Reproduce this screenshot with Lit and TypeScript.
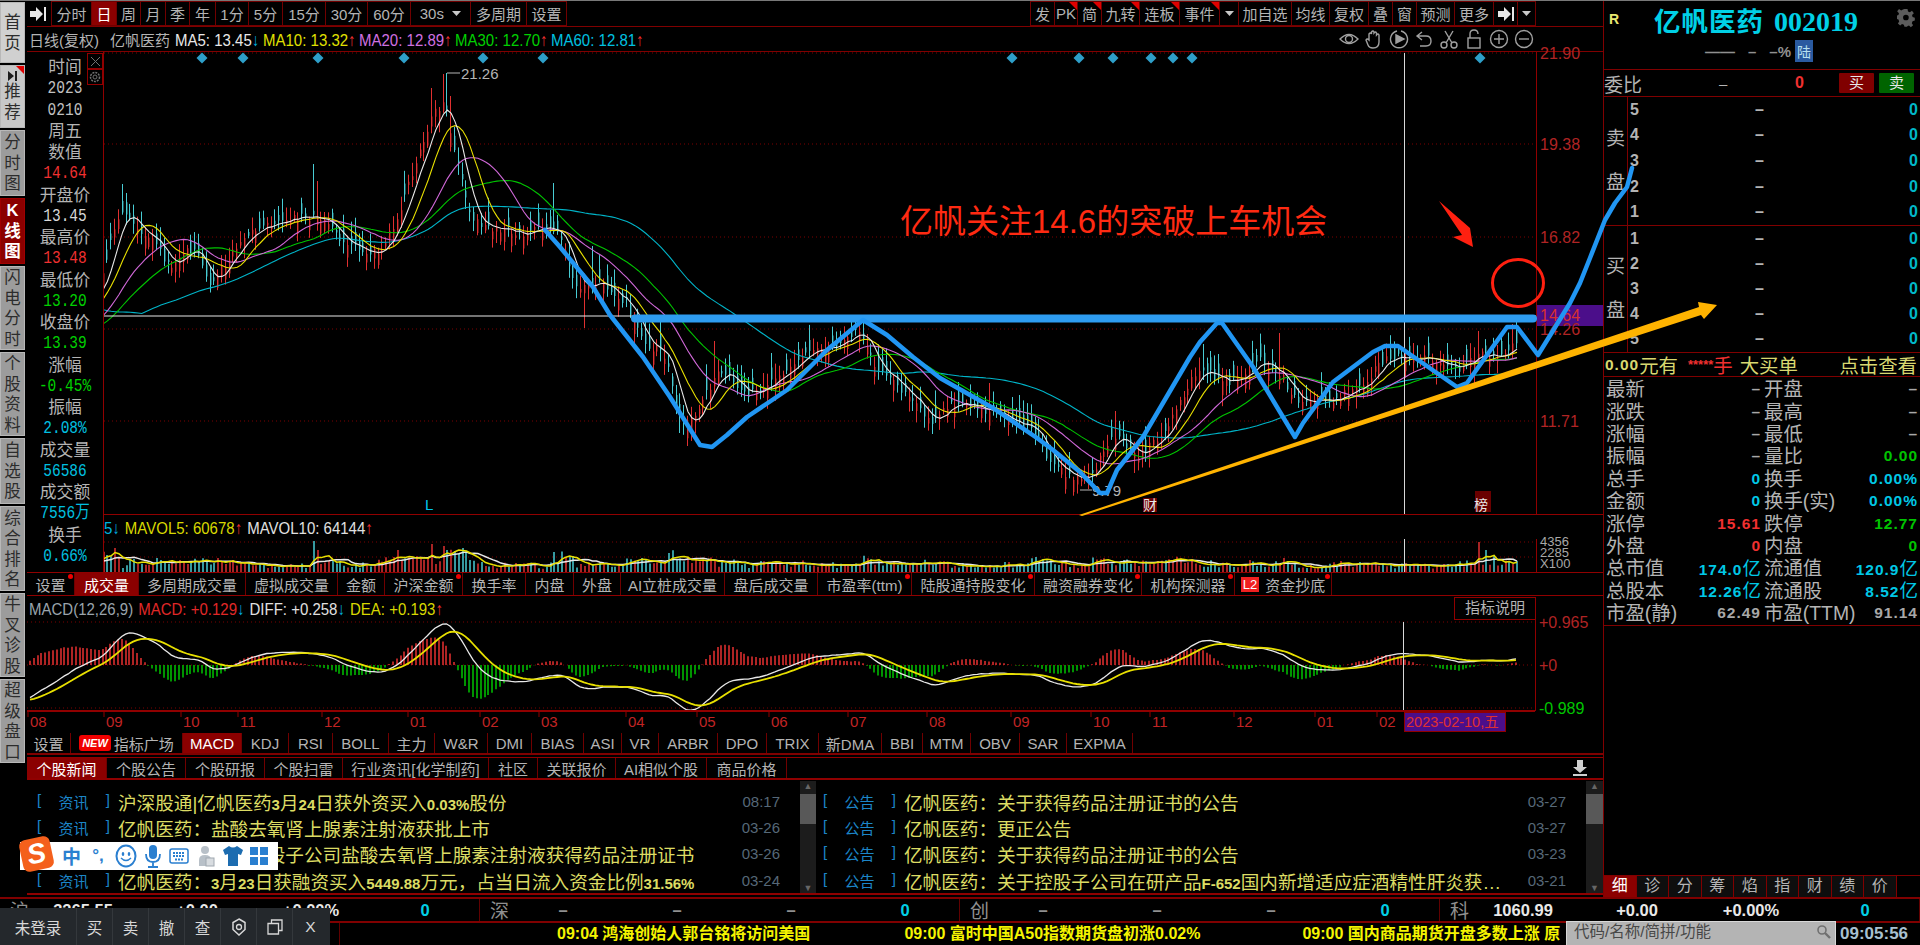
import { LitElement, html, svg, css } from "lit";
import { customElement } from "lit/decorators.js";

// ---- chart data: the white MA5 line traced in page pixels, bars are generated around it
const MA5_TRACE = [
  [30, 345], [60, 330], [90, 300], [106, 287], [122, 227], [131, 210], [139, 217], [145, 230], [163, 243], [178, 268],
  [192, 253], [200, 247], [208, 260], [218, 285], [229, 267], [245, 243], [261, 227], [286, 220], [314, 215], [327, 220],
  [339, 227], [351, 240], [367, 247], [386, 253], [400, 227], [412, 197], [424, 160], [441, 113], [453, 103], [461, 143],
  [469, 173], [478, 213], [490, 227], [510, 228], [531, 232], [547, 228], [559, 227], [570, 240], [575, 263], [585, 287],
  [593, 287], [607, 278], [617, 290], [633, 300], [642, 322], [655, 345], [668, 350], [677, 367], [685, 410], [695, 427],
  [708, 403], [727, 370], [737, 377], [748, 392], [763, 392], [777, 382], [793, 370], [807, 360], [817, 347], [837, 345],
  [853, 340], [863, 333], [872, 337], [880, 363], [888, 373], [903, 383], [917, 397], [930, 410], [942, 423], [953, 407],
  [960, 402], [973, 402], [990, 408], [1013, 417], [1040, 427], [1053, 453], [1073, 473], [1080, 477], [1100, 472],
  [1110, 453], [1120, 438], [1130, 438], [1142, 455], [1150, 452], [1163, 440], [1180, 417], [1193, 390], [1205, 370],
  [1217, 370], [1222, 377], [1237, 382], [1250, 377], [1265, 358], [1272, 363], [1290, 373], [1297, 395], [1305, 399],
  [1320, 398], [1343, 400], [1360, 387], [1373, 382], [1387, 363], [1400, 355], [1410, 357], [1430, 358], [1453, 360],
  [1467, 367], [1480, 357], [1493, 352], [1507, 357], [1515, 347], [1530, 335],
];

const SPIKES: [number, number][] = [
  [122, 183], [125, 192], [313, 163], [316, 180], [433, 87], [441, 73], [447, 72], [452, 95], [553, 182], [593, 245],
  [714, 340], [988, 382], [1116, 410], [1202, 343], [1281, 332], [1479, 330], [1513, 323],
];
const DIPS: [number, number][] = [[583, 327], [688, 445], [680, 432], [932, 433], [1135, 472]];
const VOL_SPIKES: [number, number][] = [
  [113, 24], [313, 31], [316, 22], [395, 22], [433, 28], [441, 26], [447, 22], [462, 24], [553, 20], [1479, 30], [1486, 22], [1493, 17],
];

const STEP = 3.82;

function traceY(x: number) {
  const t = MA5_TRACE;
  if (x <= t[0][0]) return t[0][1];
  for (let i = 1; i < t.length; i++) {
    if (x <= t[i][0]) {
      const f = (x - t[i - 1][0]) / (t[i][0] - t[i - 1][0]);
      return t[i - 1][1] + f * (t[i][1] - t[i - 1][1]);
    }
  }
  return t[t.length - 1][1];
}

let seed = 20230210;
function rnd() {
  seed = (seed + 0x6d2b79f5) | 0;
  let t = Math.imul(seed ^ (seed >>> 15), 1 | seed);
  t = (t + Math.imul(t ^ (t >>> 7), 61 | t)) ^ t;
  return ((t ^ (t >>> 14)) >>> 0) / 4294967296;
}

interface Bar { x: number; open: number; close: number; high: number; low: number; up: boolean; vol: number; }

const bars: Bar[] = [];
const count = Math.floor((1516 - 30) / STEP) + 1;
for (let i = 0; i < count; i++) {
  const x = 30 + i * STEP;
  const close = traceY(x + 8) + (rnd() - 0.5) * 8;
  const slope = traceY(x + 12) - traceY(x + 8);
  const up = rnd() < 0.5 - Math.max(-0.3, Math.min(0.3, slope * 0.05));
  const len = 4 + rnd() * 20;
  const open = up ? close + len * 0.6 : close - len * 0.6;
  let high = Math.min(open, close) - rnd() * 12 - 3;
  let low = Math.max(open, close) + rnd() * 10 + 2;
  for (const [sx, top] of SPIKES) if (Math.abs(sx - x) < STEP / 2) high = top;
  for (const [sx, bot] of DIPS) if (Math.abs(sx - x) < STEP / 2) low = bot;
  let vol = 3 + rnd() * 6 + Math.abs(slope) * 0.8;
  for (const [sx, h] of VOL_SPIKES) if (Math.abs(sx - x) < STEP / 2) vol = h;
  bars.push({ x, open, close, high, low, up, vol });
}

const older = [
  ...Array(30).fill(205),
  ...Array(30).fill(340),
];
const closes = [...older, ...bars.map((b) => b.close)];

function maLine(n: number) {
  return bars.map((b, i) => {
    const end = i + older.length + 1;
    const part = closes.slice(end - n, end);
    return [b.x + 1, part.reduce((a, c) => a + c, 0) / n];
  });
}

function volLine(n: number) {
  return bars.map((b, i) => {
    const from = Math.max(0, i - n + 1);
    const part = bars.slice(from, i + 1);
    return [b.x + 1, 571 - part.reduce((a, c) => a + c.vol, 0) / part.length];
  });
}

const toPrice = (y: number) => 21.9 - (y - 52) / 36.1;
const line = (pts: number[][]) => "M" + pts.map((p) => `${p[0].toFixed(1)} ${p[1].toFixed(1)}`).join("L");

const macd = (() => {
  const p0 = toPrice(bars[0].close);
  let e12 = p0;
  let e26 = p0 + 0.8;
  let dea = -0.8;
  return bars.map((b) => {
    const p = toPrice(b.close);
    e12 += (p - e12) * (2 / 13);
    e26 += (p - e26) * (2 / 27);
    const diff = e12 - e26;
    dea += (diff - dea) * (2 / 10);
    return { x: b.x + 1, diff, dea, bar: 2 * (diff - dea) };
  });
})();

const macdY = (v: number) => Math.max(612, 665 - v * 44);

const paths = {
  redWick: bars.filter((b) => b.up).map((b) => `M${Math.round(b.x) + 0.5} ${b.high.toFixed(1)}V${b.low.toFixed(1)}`).join(""),
  cyanWick: bars.filter((b) => !b.up).map((b) => `M${Math.round(b.x) + 0.5} ${b.high.toFixed(1)}V${b.low.toFixed(1)}`).join(""),
  redBody: bars.filter((b) => b.up).map((b) => `M${Math.round(b.x) + 0.7} ${b.open.toFixed(1)}V${b.close.toFixed(1)}`).join(""),
  cyanBody: bars.filter((b) => !b.up).map((b) => `M${Math.round(b.x) + 0.7} ${b.open.toFixed(1)}V${b.close.toFixed(1)}`).join(""),
  volRed: bars.filter((b) => b.up).map((b) => `M${Math.round(b.x) + 1} 571V${(571 - b.vol).toFixed(1)}`).join(""),
  volCyan: bars.filter((b) => !b.up).map((b) => `M${Math.round(b.x) + 1} 571V${(571 - b.vol).toFixed(1)}`).join(""),
  macdRed: macd.filter((m) => m.bar > 0).map((m) => `M${Math.round(m.x)} 665V${macdY(m.bar).toFixed(1)}`).join(""),
  macdGreen: macd.filter((m) => m.bar < 0).map((m) => `M${Math.round(m.x)} 665V${macdY(m.bar).toFixed(1)}`).join(""),
};

const base = css`
  :host {
    display: block;
    font-family: "Liberation Sans", "Noto Sans CJK SC", sans-serif;
    color: #b4b4b4;
  }
  svg {
    display: block;
  }
  svg text {
    font-family: "Liberation Sans", "Noto Sans CJK SC", sans-serif;
  }
`;

const arrowIcon = svg`<path d="M0 4h6V0l7 7-7 7v-4H0zM14 0h2v14h-2z" fill="#e8e8e8"/>`;

// ---- price pane
@customElement("price-pane")
export class PricePane extends LitElement {
  static styles = [base, css`:host { height: 462px; } svg { overflow: visible; }`];

  render() {
    const grids = [52, 143, 236, 328, 420];
    const axis: [string, number][] = [["21.90", 52], ["19.38", 143], ["16.82", 236], ["14.26", 328], ["11.71", 420]];
    const diamonds = [202, 243, 318, 404, 483, 543, 1012, 1079, 1113, 1151, 1173, 1192, 1480];
    return html`<svg width="1499" height="462" viewBox="104 51 1499 462">
      ${grids.map((y) => svg`<line x1="104" x2="1536" y1=${y} y2=${y} stroke="#7c0000" stroke-dasharray="1 3"/>`)}
      ${diamonds.map((x) => svg`<polygon points="${x - 5.5},57 ${x},51.5 ${x + 5.5},57 ${x},62.5" fill="#2e9fc9"/>`)}
      <path d=${paths.redWick} stroke="#e03030" fill="none"/>
      <path d=${paths.redBody} stroke="#e03030" stroke-width="1.4" fill="none"/>
      <path d=${paths.cyanWick} stroke="#48ccd4" fill="none"/>
      <path d=${paths.cyanBody} stroke="#48ccd4" stroke-width="1.4" fill="none"/>
      <path d=${line(maLine(60))} stroke="#00b4c8" stroke-width="1.1" fill="none"/>
      <path d=${line(maLine(30))} stroke="#00c400" stroke-width="1.1" fill="none"/>
      <path d=${line(maLine(20))} stroke="#d068d8" stroke-width="1.1" fill="none"/>
      <path d=${line(maLine(10))} stroke="#e8e000" stroke-width="1.1" fill="none"/>
      <path d=${line(maLine(5))} stroke="#e8e8e8" stroke-width="1.1" fill="none"/>
      <line x1="104" x2="1536" y1="315" y2="315" stroke="#e8e8e8"/>
      <line x1="1404.5" x2="1404.5" y1="52" y2="513" stroke="#d8d8d8"/>
      <line x1="1536.5" x2="1536.5" y1="51" y2="513" stroke="#900000"/>
      <rect x="1537" y="304" width="66" height="21" fill="#4b0e8a"/>
      ${axis.map(([t, y]) => svg`<text x="1540" y=${y + 6} font-size="16" fill="#b02424">${t}</text>`)}
      <text x="1540" y="320" font-size="16" fill="#d83030">14.64</text>
      <line x1="447" x2="460" y1="72" y2="72" stroke="#b4b4b4"/>
      <text x="461" y="78" font-size="15" fill="#b4b4b4">21.26</text>
      <line x1="1080" x2="1092" y1="489" y2="489" stroke="#b4b4b4"/>
      <text x="1092" y="495" font-size="15" fill="#b4b4b4">9.79</text>
      <text x="425" y="509" font-size="15" fill="#00c8f0">L</text>
      <rect x="1143" y="497" width="14" height="14" fill="#6a0000"/>
      <text x="1143" y="509" font-size="14" fill="#e8e8e8">财</text>
      <rect x="1475" y="490" width="16" height="21" fill="#6a0000"/>
      <text x="1474" y="509" font-size="14" fill="#e8e8e8">榜</text>
    </svg>`;
  }
}

// ---- volume pane
@customElement("volume-pane")
export class VolumePane extends LitElement {
  static styles = [
    base,
    css`
      :host {
        border-top: 1px solid #900000;
        height: 58px;
      }
      .legend {
        height: 24px;
        display: flex;
        align-items: center;
        gap: 5px;
        font-size: 15px;
        white-space: nowrap;
        transform: scaleY(1.15);
      }
      .y { color: #d8d800; }
      .w { color: #e0e0e0; }
      .cut { color: #00b4e0; }
      .r { color: #f03030; }
      svg { overflow: visible; }
    `,
  ];

  render() {
    return html`<div class="legend">
        <span class="cut">5↓</span>
        <span class="y">MAVOL5: 60678<span class="r">↑</span></span>
        <span class="w">MAVOL10: 64144<span class="r">↑</span></span>
      </div>
      <svg width="1499" height="33" viewBox="104 538 1499 33">
        <line x1="104" x2="1536" y1="541" y2="541" stroke="#7c0000" stroke-dasharray="1 3"/>
        <line x1="104" x2="1536" y1="556" y2="556" stroke="#7c0000" stroke-dasharray="1 3"/>
        <path d=${paths.volRed} stroke="#e03030" stroke-width="1.5" fill="none"/>
        <path d=${paths.volCyan} stroke="#48ccd4" stroke-width="1.5" fill="none"/>
        <path d=${line(volLine(10))} stroke="#e8e8e8" stroke-width="1.5" fill="none"/>
        <path d=${line(volLine(5))} stroke="#e8e000" stroke-width="1.5" fill="none"/>
        <line x1="1404.5" x2="1404.5" y1="538" y2="571" stroke="#d8d8d8"/>
        <line x1="1536.5" x2="1536.5" y1="538" y2="571" stroke="#900000"/>
        <text x="1540" y="545" font-size="13" fill="#a8a8a8">4356</text>
        <text x="1540" y="556" font-size="13" fill="#a8a8a8">2285</text>
        <text x="1540" y="567" font-size="13" fill="#a8a8a8">X100</text>
      </svg>`;
  }
}

// ---- macd pane with its date axis
@customElement("macd-pane")
export class MacdPane extends LitElement {
  static styles = [
    base,
    css`
      .legend {
        height: 24px;
        display: flex;
        align-items: center;
        gap: 5px;
        padding-left: 2px;
        font-size: 15px;
        white-space: nowrap;
        transform: scaleY(1.15);
      }
      .g { color: #9aa4ac; }
      .m { color: #e02828; }
      .w { color: #e0e0e0; }
      .y { color: #d8d800; }
      .c { color: #00b4e0; }
      .r { color: #f03030; }
      .explain {
        position: absolute;
        left: 1427px;
        top: 1px;
        width: 82px;
        height: 23px;
        box-sizing: border-box;
        border: 1px solid #900000;
        text-align: center;
        line-height: 20px;
        font-size: 15px;
      }
      .wrap { position: relative; }
      svg { overflow: visible; }
    `,
  ];

  render() {
    const months: [string, number][] = [
      ["08", 31], ["09", 107], ["10", 184], ["11", 241], ["12", 325], ["01", 411], ["02", 483], ["03", 542], ["04", 629],
      ["05", 700], ["06", 772], ["07", 851], ["08", 930], ["09", 1014], ["10", 1094], ["11", 1153], ["12", 1237], ["01", 1318], ["02", 1380],
    ];
    return html`<div class="wrap">
      <div class="legend">
        <span class="g">MACD(12,26,9)</span>
        <span class="m">MACD: +0.129<span class="c">↓</span></span>
        <span class="w">DIFF: +0.258<span class="c">↓</span></span>
        <span class="y">DEA: +0.193<span class="r">↑</span></span>
      </div>
      <div class="explain">指标说明</div>
      <svg width="1575" height="113" viewBox="28 620 1575 113">
        <line x1="28" x2="1536" y1="622" y2="622" stroke="#7c0000" stroke-dasharray="1 3"/>
        <line x1="28" x2="1536" y1="665" y2="665" stroke="#7c0000" stroke-dasharray="1 3"/>
        <line x1="28" x2="1536" y1="708" y2="708" stroke="#7c0000" stroke-dasharray="1 3"/>
        <path d=${paths.macdRed} stroke="#e83030" stroke-width="1.5" fill="none"/>
        <path d=${paths.macdGreen} stroke="#00c400" stroke-width="1.5" fill="none"/>
        <path d=${line(macd.map((m) => [m.x, macdY(m.diff)]))} stroke="#e8e8e8" stroke-width="1.3" fill="none"/>
        <path d=${line(macd.map((m) => [m.x, macdY(m.dea)]))} stroke="#e8e000" stroke-width="1.8" fill="none"/>
        <line x1="1404.5" x2="1404.5" y1="622" y2="711" stroke="#d8d8d8"/>
        <line x1="1536.5" x2="1536.5" y1="620" y2="711" stroke="#900000"/>
        <line x1="28" x2="1536" y1="711" y2="711" stroke="#900000" stroke-width="2"/>
        <text x="1540" y="628" font-size="16" fill="#b02424">+0.965</text>
        <text x="1540" y="671" font-size="16" fill="#b02424">+0</text>
        <text x="1540" y="714" font-size="16" fill="#00c400">-0.989</text>
        ${months.map(
          ([t, x]) => svg`<line x1=${x - 2} x2=${x - 2} y1="711" y2="717" stroke="#900000"/>
            <text x=${x} y="727" font-size="15" fill="#c02424">${t}</text>`
        )}
        <rect x="1405.5" y="712.5" width="101" height="19" fill="#4b0e8a" stroke="#900000"/>
        <text x="1407" y="727" font-size="14.5" fill="#e03030">2023-02-10,五</text>
      </svg>
    </div>`;
  }
}

// ---- news
@customElement("news-panel")
export class NewsPanel extends LitElement {
  static styles = [
    base,
    css`
      :host {
        height: 140px;
      }
      .tabs {
        height: 23px;
        display: flex;
        border-top: 1px solid #900000;
        border-bottom: 2px solid #900000;
        box-sizing: border-box;
        position: relative;
        font-size: 15px;
      }
      .tab {
        display: flex;
        align-items: center;
        justify-content: center;
        border-right: 1px solid #700000;
        box-sizing: border-box;
        white-space: nowrap;
      }
      .tab.on {
        background: #8b0000;
        color: #fff;
      }
      .dl {
        position: absolute;
        right: 16px;
        top: 2px;
      }
      .cols {
        display: flex;
        margin-top: 1px;
        height: 114px;
        border-bottom: 2px solid #900000;
        box-sizing: border-box;
      }
      .col {
        padding: 7px 20px 0 10px;
        box-sizing: border-box;
        width: 773px;
      }
      .col.right {
        width: 770px;
        padding-left: 7px;
      }
      .row {
        height: 26.3px;
        display: flex;
        align-items: center;
        font-size: 18.6px;
        color: #dcdc64;
        white-space: nowrap;
      }
      .tag {
        width: 73px;
        margin-right: 8px;
        display: flex;
        justify-content: space-between;
        color: #1c86c8;
        font-size: 15px;
        flex: none;
      }
      .title {
        flex: 1;
        overflow: hidden;
      }
      .num {
        font-size: 15px;
        font-weight: 700;
      }
      .time {
        color: #566878;
        font-size: 15px;
        margin-left: 8px;
      }
      .bar {
        width: 16px;
        background: #1c1c1c;
        display: flex;
        flex-direction: column;
        align-items: center;
        flex: none;
        color: #666;
        font-size: 9px;
      }
      .bar.last { width: 17px; }
      .thumb {
        width: 100%;
        height: 30px;
        background: #585858;
        margin: 3px 0 auto;
      }
    `,
  ];

  // latin runs are set smaller than the CJK around them
  private title(t: string) {
    return t.split(/([0-9A-Z.%-]+)/).map((part, i) => (i % 2 ? html`<span class="num">${part}</span>` : part));
  }

  render() {
    const tabs: [string, number][] = [
      ["个股新闻", 80], ["个股公告", 79], ["个股研报", 79], ["个股扫雷", 78], ["行业资讯[化学制药]", 146], ["社区", 49], ["关联报价", 78], ["AI相似个股", 91], ["商品价格", 80],
    ];
    const left = [
      ["沪深股通|亿帆医药3月24日获外资买入0.03%股份", "08:17"],
      ["亿帆医药：盐酸去氧肾上腺素注射液获批上市", "03-26"],
      ["亿帆医药：关于控股子公司盐酸去氧肾上腺素注射液获得药品注册证书", "03-26"],
      ["亿帆医药：3月23日获融资买入5449.88万元，占当日流入资金比例31.56%", "03-24"],
    ];
    const right = [
      ["亿帆医药：关于获得药品注册证书的公告", "03-27"],
      ["亿帆医药：更正公告", "03-27"],
      ["亿帆医药：关于获得药品注册证书的公告", "03-23"],
      ["亿帆医药：关于控股子公司在研产品F-652国内新增适应症酒精性肝炎获…", "03-21"],
    ];
    const rows = (items: string[][], kind: string) =>
      items.map(
        ([t, d]) => html`<div class="row">
          <span class="tag"><span>[</span><span>${kind}</span><span>]</span></span>
          <span class="title">${this.title(t)}</span>
          <span class="time">${d}</span>
        </div>`
      );
    const scroll = (cls = "") => html`<div class="bar ${cls}"><span>▲</span><div class="thumb"></div><span>▼</span></div>`;
    return html`<div class="tabs">
        ${tabs.map(([t, w], i) => html`<div class="tab ${i === 0 ? "on" : ""}" style="width:${w}px">${t}</div>`)}
        <svg class="dl" width="14" height="17" viewBox="0 0 14 17"><path d="M4 0h6v7h4l-7 6-7-6h4zM0 14h14v2H0z" fill="#d0d0d0"/></svg>
      </div>
      <div class="cols">
        <div class="col">${rows(left, "资讯")}</div>
        ${scroll()}
        <div class="col right">${rows(right, "公告")}</div>
        ${scroll("last")}
      </div>`;
  }
}

// ---- right quote panel
@customElement("quote-panel")
export class QuotePanel extends LitElement {
  static styles = [
    base,
    css`
      :host {
        width: 317px;
        height: 896px;
        box-sizing: border-box;
        border-left: 1px solid #800000;
        display: flex;
        flex-direction: column;
        position: relative;
      }
      .head {
        height: 69px;
        border-bottom: 1px solid #800000;
        box-sizing: border-box;
        position: relative;
      }
      .titlebar {
        height: 36px;
        display: flex;
        align-items: center;
        padding-left: 4px;
      }
      .rmark {
        color: #e8e870;
        font: bold 14px "Liberation Sans", sans-serif;
        width: 45px;
        padding-left: 1px;
      }
      .name {
        color: #00d0e6;
        font-size: 26.5px;
        font-weight: 700;
        letter-spacing: 1px;
        white-space: nowrap;
      }
      .code {
        font-family: "Liberation Serif", serif;
        font-size: 28px;
        margin-left: 10px;
        letter-spacing: 0;
      }
      .gear {
        position: absolute;
        right: 5px;
        top: 7px;
      }
      .sub {
        display: flex;
        align-items: center;
        height: 28px;
        padding-left: 101px;
        font-size: 15px;
        color: #909090;
        font-weight: 700;
      }
      .sub span { margin-right: 13px; }
      .lu {
        background: #2a5aa0;
        color: #b8e0f0;
        font-size: 14px;
        padding: 1px 2px;
        margin-left: -9px;
        font-weight: 400;
      }
      .ratio {
        height: 27px;
        border-bottom: 1px solid #800000;
        box-sizing: border-box;
        display: flex;
        align-items: center;
        font-size: 19px;
        position: relative;
      }
      .dash1 { position: absolute; left: 115px; font-size: 15px; }
      .zero { position: absolute; left: 191px; font: bold 16px "Liberation Sans", sans-serif; color: #f03030; }
      .btn {
        position: absolute;
        top: 3px;
        width: 35px;
        height: 20px;
        color: #e8e8e8;
        font-size: 15px;
        text-align: center;
        line-height: 19px;
        border-radius: 1px;
      }
      .btn.buy { left: 235px; background: #800000; }
      .btn.sell { left: 275px; background: #006400; }
      .book {
        display: flex;
        border-bottom: 1px solid #800000;
        box-sizing: border-box;
      }
      .book.top { height: 129px; }
      .book.bottom { height: 127px; }
      .side {
        width: 24px;
        border-right: 1px solid #800000;
        box-sizing: border-box;
        font-size: 19px;
        display: flex;
        flex-direction: column;
        align-items: center;
        justify-content: center;
        gap: 24px;
        line-height: 20px;
      }
      .levels {
        flex: 1;
        display: flex;
        flex-direction: column;
        justify-content: space-around;
        padding: 0 2px 0 2px;
      }
      .lv {
        display: grid;
        grid-template-columns: 125px 1fr;
        font: bold 16px "Liberation Sans", sans-serif;
      }
      .lv b { text-align: right; color: #00b8c8; }
      .big {
        height: 24px;
        border-bottom: 1px solid #800000;
        box-sizing: border-box;
        display: flex;
        align-items: center;
        font-size: 19.4px;
        color: #d8d870;
        white-space: nowrap;
        padding-left: 1px;
      }
      .big .num { font: bold 15.5px "Liberation Sans", sans-serif; letter-spacing: 1px; }
      .big .stars { color: #f03030; margin-left: 10px; font-size: 13px; font-weight: 700; }
      .big .hand { color: #f03030; }
      .big .buyb { margin-left: 7px; }
      .big .look { margin-left: auto; margin-right: 3px; }
      .stats {
        display: grid;
        grid-template-columns: 158px 1fr;
        grid-auto-rows: 22.4px;
        padding: 1px 2px 2px 2px;
        border-bottom: 1px solid #800000;
        height: 249px;
        box-sizing: border-box;
      }
      .cell {
        display: flex;
        justify-content: space-between;
        align-items: center;
        font-size: 19.4px;
        white-space: nowrap;
        line-height: 22px;
      }
      .cell:nth-child(odd) { padding-right: 3px; }
      .cell b {
        font: bold 15.5px/22px "Liberation Sans", sans-serif;
        letter-spacing: 1px;
      }
      .u { font-size: 18.5px; font-weight: 400; letter-spacing: 0; font-family: "Noto Sans CJK SC", sans-serif; }
      .cy { color: #00c8e6; }
      .rd { color: #f03030; }
      .gr { color: #00c400; }
      .gy { color: #a8a8a8; }
      .tabs {
        margin-top: auto;
        height: 22px;
        display: flex;
        border-top: 1px solid #800000;
        box-sizing: border-box;
        font-size: 16px;
      }
      .t {
        width: 32.5px;
        border-right: 1px solid #800000;
        background: #0e0e0e;
        text-align: center;
        line-height: 20px;
        box-sizing: border-box;
      }
      .t.on { background: #8b0000; color: #fff; }
    `,
  ];

  private value(v: string) {
    return v.endsWith("亿") ? html`${v.slice(0, -1)}<span class="u">亿</span>` : v;
  }

  render() {
    const stats: [string, string, string][] = [
      ["最新", "–", "gy"], ["开盘", "–", "gy"],
      ["涨跌", "–", "gy"], ["最高", "–", "gy"],
      ["涨幅", "–", "gy"], ["最低", "–", "gy"],
      ["振幅", "–", "gy"], ["量比", "0.00", "gr"],
      ["总手", "0", "cy"], ["换手", "0.00%", "cy"],
      ["金额", "0", "cy"], ["换手(实)", "0.00%", "cy"],
      ["涨停", "15.61", "rd"], ["跌停", "12.77", "gr"],
      ["外盘", "0", "rd"], ["内盘", "0", "gr"],
      ["总市值", "174.0亿", "cy"], ["流通值", "120.9亿", "cy"],
      ["总股本", "12.26亿", "cy"], ["流通股", "8.52亿", "cy"],
      ["市盈(静)", "62.49", "gy"], ["市盈(TTM)", "91.14", "gy"],
    ];
    const levels = (list: number[]) =>
      list.map((n) => html`<div class="lv"><span>${n}</span><span>–<b style="float:right">0</b></span></div>`);
    return html`<div class="head">
        <div class="titlebar">
          <span class="rmark">R</span>
          <span class="name">亿帆医药<span class="code">002019</span></span>
        </div>
        <svg class="gear" width="18" height="20" viewBox="0 0 20 20">
          <path fill="#5c5c5c" fill-rule="evenodd" d="M8 0h4l.6 3 2.3 1 2.6-1.7 2.3 2.9-2.2 2.2.6 2.4 2.8.9v3.6l-2.8.9-.9 2.3 1.6 2.5-2.8 2.4-2.3-2-2.3.9L11.8 22H8.2l-.7-2.6-2.3-.9-2.3 2L.1 17.8l1.6-2.5-.9-2.3L-2 12V8.400l2.8-.9.6-2.4L-.8 2.900 1.500 0l2.600 1.700 2.300-1z M10 7a3.500 3.500 0 1 0 0 7 3.500 3.500 0 0 0 0-7z" transform="scale(.9) translate(1 0)"/>
        </svg>
        <div class="sub"><span>——</span><span>–</span><span>–%</span><span class="lu">陆</span></div>
      </div>
      <div class="ratio">
        委比<span class="dash1">–</span><span class="zero">0</span>
        <span class="btn buy">买</span><span class="btn sell">卖</span>
      </div>
      <div class="book top">
        <div class="side"><span>卖</span><span>盘</span></div>
        <div class="levels">${levels([5, 4, 3, 2, 1])}</div>
      </div>
      <div class="book bottom">
        <div class="side"><span>买</span><span>盘</span></div>
        <div class="levels">${levels([1, 2, 3, 4, 5])}</div>
      </div>
      <div class="big">
        <span class="num">0.00</span>元有<span class="stars">*****</span><span class="hand">手</span>
        <span class="buyb">大买单</span><span class="look">点击查看</span>
      </div>
      <div class="stats">
        ${stats.map(([k, v, c]) => html`<div class="cell"><span>${k}</span><b class=${c}>${this.value(v)}</b></div>`)}
      </div>
      <div class="tabs">
        ${["细", "诊", "分", "筹", "焰", "指", "财", "绩", "价"].map((t, i) => html`<div class="t ${i === 0 ? "on" : ""}">${t}</div>`)}
      </div>`;
  }
}

// ---- index strip and ticker
@customElement("status-bars")
export class StatusBars extends LitElement {
  static styles = [
    base,
    css`
      .indexes {
        height: 24px;
        display: grid;
        grid-template-columns: repeat(4, 480px);
        border-top: 2px solid #800000;
        box-sizing: border-box;
      }
      .idx {
        display: grid;
        grid-template-columns: 26px repeat(4, 114px);
        grid-template-rows: 22px;
        align-items: center;
        border-right: 1px solid #600000;
        box-sizing: border-box;
        font: bold 16.5px/22px "Liberation Sans", sans-serif;
        color: #e8e8e8;
        text-align: center;
      }
      .idx i {
        font: 400 19px/22px "Noto Sans CJK SC", sans-serif;
        color: #909090;
        text-align: left;
        padding-left: 10px;
      }
      .idx span:nth-of-type(4) { color: #00d0e6; }
      .idx .none { color: #909090; }
      .foot {
        height: 24px;
        border-top: 2px solid #800000;
        box-sizing: border-box;
        display: flex;
      }
      .gap {
        width: 340px;
        border-right: 1px solid #600000;
        box-sizing: border-box;
        flex: none;
      }
      .ticker {
        width: 1226px;
        flex: none;
        overflow: hidden;
        display: flex;
        gap: 94px;
        padding-left: 217px;
        box-sizing: border-box;
        color: #f4f400;
        font: bold 16px/22px "Liberation Sans", "Noto Sans CJK SC", sans-serif;
        white-space: nowrap;
      }
      .ticker span:nth-child(2) { margin-right: 8px; }
      .search {
        width: 270px;
        flex: none;
        height: 24px;
        margin-top: -2px;
        background: #b4b4b4;
        border: 1px solid #d8d8d8;
        border-width: 1px 1px 0 1px;
        box-sizing: border-box;
        color: #484848;
        font-size: 15.5px;
        line-height: 20px;
        padding: 0 4px 3px 7px;
        display: flex;
        align-items: center;
        justify-content: space-between;
      }
      .clock {
        flex: 1;
        margin-left: 4px;
        color: #a8c0d0;
        font: bold 17px/22px "Liberation Sans", sans-serif;
        white-space: nowrap;
        overflow: hidden;
      }
    `,
  ];

  render() {
    const cells = [
      ["沪", "3265.55", "+0.00", "+0.00%", "0"],
      ["深", "–", "–", "–", "0"],
      ["创", "–", "–", "–", "0"],
      ["科", "1060.99", "+0.00", "+0.00%", "0"],
    ];
    return html`<div class="indexes">
        ${cells.map(
          ([n, a, b, c, d]) => html`<div class="idx">
            <i>${n}</i>
            <span class=${a === "–" ? "none" : ""}>${a}</span>
            <span class=${b === "–" ? "none" : ""}>${b}</span>
            <span class=${c === "–" ? "none" : ""}>${c}</span>
            <span>${d}</span>
          </div>`
        )}
      </div>
      <div class="foot">
        <div class="gap"></div>
        <div class="ticker">
          <span>09:04 鸿海创始人郭台铭将访问美国</span>
          <span>09:00 富时中国A50指数期货盘初涨0.02%</span>
          <span>09:00 国内商品期货开盘多数上涨 原</span>
        </div>
        <div class="search">
          代码/名称/简拼/功能
          <svg width="14" height="14" viewBox="0 0 14 14"><circle cx="5" cy="5" r="4" fill="none" stroke="#707070" stroke-width="1.6"/><path d="M8 8l5 5" stroke="#707070" stroke-width="2.400"/></svg>
        </div>
        <div class="clock">09:05:56</div>
      </div>`;
  }
}

// ---- floating widgets: input method bar and the dark trade bar
@customElement("ime-bar")
export class ImeBar extends LitElement {
  static styles = [
    base,
    css`
      :host {
        position: absolute;
        left: 20px;
        top: 841px;
        width: 258px;
        height: 28px;
        background: #fff;
        display: flex;
        align-items: center;
      }
      .logo {
        position: absolute;
        left: 1px;
        top: -4px;
        width: 31px;
        height: 32px;
        border-radius: 6px;
        background: #f4601c;
        transform: rotate(-12deg);
        color: #fff;
        font: italic bold 28px "Liberation Sans", sans-serif;
        line-height: 32px;
        text-align: center;
      }
      .items {
        margin-left: 42px;
        display: flex;
        align-items: center;
        gap: 7px;
        color: #2a7fd0;
      }
      .zh { font: bold 19px "Noto Sans CJK SC", sans-serif; line-height: 24px; }
      .dot { font: bold 17px "Liberation Sans", sans-serif; width: 20px; text-align: center; }
    `,
  ];

  render() {
    return html`<div class="logo">S</div>
      <div class="items">
        <span class="zh">中</span>
        <span class="dot">°,</span>
        <svg width="22" height="24" viewBox="0 0 22 24">
          <ellipse cx="11" cy="12" rx="9.500" ry="10.500" fill="none" stroke="#2a7fd0" stroke-width="2"/>
          <ellipse cx="8" cy="10" rx="1.300" ry="2" fill="#2a7fd0"/><ellipse cx="14" cy="10" rx="1.300" ry="2" fill="#2a7fd0"/>
          <path d="M6 14q5 5 10 0" fill="none" stroke="#2a7fd0" stroke-width="1.500"/>
        </svg>
        <svg width="18" height="24" viewBox="0 0 18 24">
          <rect x="5" y="1" width="8" height="14" rx="4" fill="#2a7fd0"/>
          <path d="M2 10q0 8 7 8t7-8M9 18v4M4 23h10" fill="none" stroke="#2a7fd0" stroke-width="1.800"/>
        </svg>
        <svg width="20" height="20" viewBox="0 0 20 20">
          <rect x="1" y="3" width="18" height="14" rx="2" fill="none" stroke="#2a7fd0" stroke-width="1.500"/>
          <path d="M4 7h12M4 10h12M6 13.500h8" stroke="#2a7fd0" stroke-width="1.800" stroke-dasharray="2 1"/>
        </svg>
        <svg width="20" height="24" viewBox="0 0 20 24">
          <circle cx="9" cy="6" r="4" fill="#b8c0c8"/><path d="M3 22v-6q0-5 6-5t6 5v6z" fill="#b8c0c8"/>
          <rect x="10" y="14" width="8" height="8" fill="#d8dce0" stroke="#a0a8b0"/>
        </svg>
        <svg width="20" height="22" viewBox="0 0 20 22"><path d="M6 1L0 5l2 5 3-1v12h10V9l3 1 2-5-6-4q-4 3-8 0z" fill="#1c6cb0"/></svg>
        <svg width="18" height="20" viewBox="0 0 18 20" fill="#2a7fd0">
          <rect x="0" y="1" width="8" height="8"/><rect x="10" y="1" width="8" height="8"/><rect x="0" y="11" width="8" height="8"/><rect x="10" y="11" width="8" height="8"/>
        </svg>
      </div>`;
  }
}

@customElement("trade-bar")
export class TradeBar extends LitElement {
  static styles = [
    base,
    css`
      :host {
        position: absolute;
        left: 0;
        top: 907px;
        width: 330px;
        height: 37px;
        background: #24282c;
        display: flex;
        color: #d8d8d8;
        font-size: 15.5px;
      }
      div {
        width: 36px;
        border-left: 1px solid #34383c;
        display: flex;
        align-items: center;
        justify-content: center;
        box-sizing: border-box;
      }
      div.login {
        width: 76px;
        border: none;
      }
    `,
  ];

  render() {
    return html`<div class="login">未登录</div>
      <div>买</div><div>卖</div><div>撤</div><div>查</div>
      <div><svg width="16" height="18" viewBox="0 0 16 18"><path d="M8 1l6 3.500v7L8 17l-6-5.500v-7z" fill="none" stroke="#d8d8d8" stroke-width="1.500"/><circle cx="8" cy="9" r="2.500" fill="none" stroke="#d8d8d8" stroke-width="1.300"/></svg></div>
      <div><svg width="16" height="16" viewBox="0 0 16 16"><path d="M1 4.500h10.500V15H1zM4.500 4V1H15v10.500h-3" fill="none" stroke="#d8d8d8" stroke-width="1.300"/></svg></div>
      <div>X</div>`;
  }
}

// ---- page
@customElement("app-root")
export class AppRoot extends LitElement {
  static styles = [
    base,
    css`
      :host {
        width: 1920px;
        height: 945px;
        position: relative;
        background: #000;
        overflow: hidden;
        border-top: 1px solid #787878;
        box-sizing: border-box;
      }
      .top {
        display: flex;
        height: 896px;
      }
      .sidebar {
        width: 25px;
        flex: none;
        display: flex;
        flex-direction: column;
        gap: 2px;
        padding-top: 1px;
      }
      .side {
        background: #9c9c9c;
        color: #2c2c2c;
        border: 1px solid #b8b8b8;
        box-sizing: border-box;
        font-size: 16.5px;
        display: flex;
        flex-direction: column;
        align-items: center;
        justify-content: center;
        line-height: 20.500px;
        position: relative;
      }
      .side.home { background: #d0d0d0; }
      .side.rec { background: #c8c8c8; }
      .side.on {
        background: #8b0000;
        border-color: #a00000;
        color: #fff;
        font-weight: 700;
      }
      .corner {
        position: absolute;
        right: 0;
        top: 0;
        width: 0;
        height: 0;
        border-top: 8px solid #e00000;
        border-left: 8px solid transparent;
      }
      .center {
        width: 1576px;
        margin-left: 2px;
        flex: none;
      }
      .toolbar {
        height: 25px;
        display: flex;
        padding-left: 3px;
        font-size: 15px;
      }
      .arrow {
        width: 21px;
        display: flex;
        align-items: center;
        flex: none;
      }
      .tb {
        border: 1px solid #700000;
        border-left: none;
        box-sizing: border-box;
        display: flex;
        align-items: center;
        justify-content: center;
        position: relative;
        white-space: nowrap;
        flex: none;
      }
      .tb.first { border-left: 1px solid #700000; }
      .tb.on {
        background: #8b0000;
        color: #fff;
      }
      .fill { flex: 1; }
      .legend {
        height: 25px;
        border-top: 1px solid #800000;
        box-sizing: border-box;
        display: flex;
        align-items: center;
        padding-left: 2px;
        font-size: 15px;
        white-space: nowrap;
        position: relative;
      }
      .legend .cn { margin-right: 11px; }
      .legend .ma { width: 96px; flex: none; transform: scaleY(1.15); }
      .legend .ma.wide { width: 88px; }
      .up { color: #f03030; }
      .dn { color: #00b4e0; }
      .icons {
        position: absolute;
        left: 1312px;
        top: 2px;
        display: flex;
        gap: 5px;
      }
      .chart {
        height: 521px;
        display: flex;
      }
      .info {
        width: 77px;
        flex: none;
        border-top: 1px solid #800000;
        border-right: 1px solid #900000;
        box-sizing: border-box;
        padding-top: 5px;
        position: relative;
        z-index: 1;
        background: #000;
        text-align: center;
        line-height: 21.250px;
        font-size: 16.8px;
      }
      .info b {
        display: block;
        font: 400 14.5px/21.250px "Liberation Mono", "Noto Sans CJK SC", monospace;
        transform: scaleY(1.25);
      }
      .mini {
        position: absolute;
        right: 0;
        top: 1px;
        width: 16px;
        height: 16px;
        box-sizing: border-box;
        border: 1px solid #900000;
        display: flex;
        align-items: center;
        justify-content: center;
      }
      .mini.two { top: 17px; }
      .plots {
        flex: 1;
        min-width: 0;
        border-top: 1px solid #800000;
      }
      .tabs {
        height: 24px;
        display: flex;
        border-top: 1px solid #900000;
        border-bottom: 1px solid #900000;
        box-sizing: border-box;
        font-size: 15px;
      }
      .tabs .tab, .inds .tab {
        display: flex;
        align-items: center;
        justify-content: center;
        border-right: 1px solid #700000;
        box-sizing: border-box;
        position: relative;
        white-space: nowrap;
        flex: none;
      }
      .tab.on { background: #8b0000; color: #fff; }
      .dot {
        position: absolute;
        right: 1px;
        top: 1px;
        width: 5px;
        height: 5px;
        border-radius: 50%;
        background: #f00000;
      }
      .l2 {
        background: #f02020;
        color: #fff;
        font-size: 13px;
        padding: 0 2px;
        margin-right: 6px;
      }
      .inds {
        height: 22px;
        display: flex;
        border-bottom: 2px solid #800000;
        box-sizing: border-box;
        font-size: 15px;
      }
      .new {
        background: #f00000;
        color: #fff;
        font: italic bold 11px "Liberation Sans", sans-serif;
        padding: 2px 3px;
        border-radius: 3px;
        margin-right: 3px;
      }
      news-panel { margin-top: 2px; }
      .overlay {
        position: absolute;
        left: 0;
        top: -1px;
        pointer-events: none;
      }
      .note {
        position: absolute;
        left: 900px;
        top: 199px;
        font-size: 33px;
        line-height: 44px;
        color: #ff2a12;
        white-space: nowrap;
      }
    `,
  ];

  private side = [
    { t: "首页", h: 61, c: "home" },
    { t: "推荐", h: 63, c: "rec" },
    { t: "分时图", h: 66, c: "" },
    { t: "K线图", h: 66, c: "on" },
    { t: "闪电分时", h: 84, c: "" },
    { t: "个股资料", h: 84, c: "" },
    { t: "自选股", h: 66, c: "" },
    { t: "综合排名", h: 85, c: "" },
    { t: "牛叉诊股", h: 84, c: "" },
    { t: "超级盘口", h: 84, c: "" },
  ];

  private leftTools: [string, number][] = [
    ["分时", 41], ["日", 25], ["周", 24], ["月", 25], ["季", 24], ["年", 26], ["1分", 33], ["5分", 34], ["15分", 43], ["30分", 42], ["60分", 43], ["30s", 60], ["多周期", 56], ["设置", 40],
  ];

  private rightTools: [string, number, boolean][] = [
    ["发", 25, false], ["PK", 23, true], ["简", 24, true], ["九转", 38, true], ["连板", 40, true], ["事件", 40, true],
  ];

  private rightTools2: [string, number][] = [
    ["加自选", 53], ["均线", 38], ["复权", 39], ["叠", 24], ["窗", 24], ["预测", 38], ["更多", 39],
  ];

  private info: [string, string?][] = [
    ["时间"], ["2023", "#c0c0c0"], ["0210", "#c0c0c0"], ["周五"], ["数值"], ["14.64", "#f03030"], ["开盘价"], ["13.45", "#d8d8d8"], ["最高价"], ["13.48", "#f03030"],
    ["最低价"], ["13.20", "#00d000"], ["收盘价"], ["13.39", "#00d000"], ["涨幅"], ["-0.45%", "#00d000"], ["振幅"], ["2.08%", "#00c0e0"], ["成交量"], ["56586", "#00c0e0"],
    ["成交额"], ["7556万", "#00c0e0"], ["换手"], ["0.66%", "#00c0e0"],
  ];

  private volTabs: [string, number, boolean][] = [
    ["设置", 48, true], ["成交量", 64, false], ["多周期成交量", 107, false], ["虚拟成交量", 92, false], ["金额", 47, false], ["沪深金额", 78, true], ["换手率", 63, false], ["内盘", 48, false], ["外盘", 47, false],
    ["AI立桩成交量", 104, false], ["盘后成交量", 93, false], ["市盈率(ttm)", 94, true], ["陆股通持股变化", 123, true], ["融资融券变化", 107, true], ["机构探测器", 93, true],
  ];

  private indTabs: [string, number][] = [
    ["MACD", 59], ["KDJ", 47], ["RSI", 44], ["BOLL", 56], ["主力", 46], ["W&R", 53], ["DMI", 44], ["BIAS", 52], ["ASI", 38], ["VR", 37], ["ARBR", 59], ["DPO", 49], ["TRIX", 52], ["新DMA", 63], ["BBI", 41], ["MTM", 48], ["OBV", 49], ["SAR", 47], ["EXPMA", 66],
  ];

  private drawn = "M545 230L560 247L593 287L610 315L643 357L670 397L700 445L712 447L727 435L747 417L787 390L827 350L863 320L887 335L913 357L940 378L993 408L1037 438L1053 450L1080 472L1100 493L1107 493L1117 470L1143 437L1190 357L1200 342L1217 323L1222 323L1253 367L1295 437L1303 423L1333 382L1373 352L1385 346L1398 346L1457 387L1467 383L1507 327L1517 327L1538 355L1570 303L1580 283L1590 258L1605 220L1615 203L1627 187L1632 168";

  render() {
    return html`<div class="top">
        <div class="sidebar">
          ${this.side.map(
            (s) => html`<div class="side ${s.c}" style="height:${s.h}px">
              ${s.c === "rec"
                ? html`<span class="corner"></span>
                    <svg width="10" height="10" viewBox="0 0 10 10"><path d="M0 0l6 5-6 5zM7 0h2v10H7z" fill="#1c1c1c"/></svg>`
                : ""}
              ${[...s.t].map((c) => html`<span>${c}</span>`)}
            </div>`
          )}
        </div>
        <div class="center">
          <div class="toolbar">
            <div class="arrow"><svg width="16" height="14" viewBox="0 0 16 14">${arrowIcon}</svg></div>
            ${this.leftTools.map(
              ([t, w], i) => html`<div class="tb ${i === 0 ? "first" : ""} ${t === "日" ? "on" : ""}" style="width:${w}px">
                ${t === "30s"
                  ? html`${t}&nbsp;&nbsp;<svg width="9" height="5" viewBox="0 0 9 5"><path d="M0 0h9L4.500 5z" fill="#c8c8c8"/></svg>`
                  : t}
              </div>`
            )}
            <div class="fill"></div>
            ${this.rightTools.map(
              ([t, w, c], i) => html`<div class="tb ${i === 0 ? "first" : ""}" style="width:${w}px">${t}${c ? html`<span class="corner"></span>` : ""}</div>`
            )}
            <div class="tb" style="width:19px"><svg width="9" height="5" viewBox="0 0 9 5"><path d="M0 0h9L4.500 5z" fill="#c8c8c8"/></svg></div>
            ${this.rightTools2.map(([t, w]) => html`<div class="tb" style="width:${w}px">${t}</div>`)}
            <div class="tb" style="width:24px"><svg width="16" height="14" viewBox="0 0 16 14">${arrowIcon}</svg></div>
            <div class="tb" style="width:18px"><svg width="9" height="5" viewBox="0 0 9 5"><path d="M0 0h9L4.500 5z" fill="#c8c8c8"/></svg></div>
            <div style="width:67px;flex:none"></div>
          </div>
          <div class="legend">
            <span class="cn">日线(复权)</span>
            <span class="cn" style="margin-right:5px">亿帆医药</span>
            <span class="ma wide" style="color:#e8e8e8">MA5: 13.45<span class="dn">↓</span></span>
            <span class="ma" style="color:#e0e000">MA10: 13.32<span class="up">↑</span></span>
            <span class="ma" style="color:#d070e0">MA20: 12.89<span class="up">↑</span></span>
            <span class="ma" style="color:#00d000">MA30: 12.70<span class="up">↑</span></span>
            <span class="ma" style="color:#00c0e0">MA60: 12.81<span class="up">↑</span></span>
            <div class="icons">
              ${this.chartIcons()}
            </div>
          </div>
          <div class="chart">
            <div class="info">
              ${this.info.map(([t, c]) => (c ? html`<b style="color:${c}">${t}</b>` : html`<div>${t}</div>`))}
              <div class="mini"><svg width="11" height="11" viewBox="0 0 11 11"><path d="M1 1l9 9M10 1l-9 9" stroke="#707070" fill="none"/></svg></div>
              <div class="mini two"><svg width="12" height="12" viewBox="0 0 12 12"><circle cx="6" cy="6" r="4.500" fill="none" stroke="#707070" stroke-width="1.500" stroke-dasharray="2 1"/><circle cx="6" cy="6" r="2" fill="none" stroke="#707070"/></svg></div>
            </div>
            <div class="plots">
              <price-pane></price-pane>
              <volume-pane></volume-pane>
            </div>
          </div>
          <div class="tabs">
            ${this.volTabs.map(
              ([t, w, d]) => html`<div class="tab ${t === "成交量" ? "on" : ""}" style="width:${w}px">${t}${d ? html`<span class="dot"></span>` : ""}</div>`
            )}
            <div class="tab" style="width:97px"><span class="l2">L2</span>资金抄底<span class="dot"></span></div>
          </div>
          <macd-pane></macd-pane>
          <div class="inds">
            <div class="tab" style="width:44px">设置</div>
            <div class="tab" style="width:112px"><span class="new">NEW</span>指标广场</div>
            ${this.indTabs.map(([t, w]) => html`<div class="tab ${t === "MACD" ? "on" : ""}" style="width:${w}px">${t}</div>`)}
          </div>
          <news-panel></news-panel>
        </div>
        <quote-panel></quote-panel>
      </div>
      <status-bars></status-bars>
      <svg class="overlay" width="1920" height="945" viewBox="0 0 1920 945">
        <path d="M635 318.500H1533" stroke="#2e9cf0" stroke-width="8" stroke-linecap="round" fill="none"/>
        <path d=${this.drawn} stroke="#2196f3" stroke-width="4.500" stroke-linejoin="round" stroke-linecap="round" fill="none"/>
        <polygon points="1079,515 1699,307 1698,302 1717,305 1704,319 1701,315 1082,516" fill="#ffb300"/>
        <ellipse cx="1518" cy="283" rx="25.500" ry="23.500" fill="none" stroke="#ff2010" stroke-width="3"/>
        <polygon points="1439,201 1470,228 1473,247 1453,237 1462,235" fill="#ff2010"/>
      </svg>
      <div class="note">亿帆关注14.6的突破上车机会</div>
      <ime-bar></ime-bar>
      <trade-bar></trade-bar>`;
  }

  private chartIcons() {
    const s = "#a0a0a0";
    return html`
      <svg width="20" height="20" viewBox="0 0 20 20" fill="none" stroke=${s} stroke-width="1.400"><path d="M1 10q9-9 18 0q-9 9-18 0z"/><circle cx="10" cy="10" r="3.500"/></svg>
      <svg width="20" height="20" viewBox="0 0 20 20" fill="none" stroke=${s} stroke-width="1.400"><path d="M5 11V5q1.500-2 2.500 0V3q1.500-2 2.500 0v1q1.500-2 2.500 0v2q1.500-2 2.500 0v7q0 6-6 6q-4 0-5-3L2 11q1-2 3 0z"/></svg>
      <svg width="20" height="20" viewBox="0 0 20 20" fill="none" stroke=${s} stroke-width="1.400"><path d="M12 2a8.500 8.500 0 1 1-4 0"/><path d="M7 6l8 4-8 4z" fill=${s}/></svg>
      <svg width="20" height="20" viewBox="0 0 20 20" fill="none" stroke=${s} stroke-width="1.400"><path d="M8 3L3 7l5 4M3 7h9q5 0 5 5t-5 5H6"/></svg>
      <svg width="20" height="20" viewBox="0 0 20 20" fill="none" stroke=${s} stroke-width="1.400"><circle cx="5" cy="16" r="3"/><circle cx="15" cy="16" r="3"/><path d="M7 14L14 2M13 14L6 2"/></svg>
      <svg width="20" height="20" viewBox="0 0 20 20" fill="none" stroke=${s} stroke-width="1.400"><rect x="4" y="9" width="12" height="10"/><path d="M6 9V5q0-4 4-4t4 4"/></svg>
      <svg width="20" height="20" viewBox="0 0 20 20" fill="none" stroke=${s} stroke-width="1.400"><circle cx="10" cy="10" r="8.500"/><path d="M5 10h10M10 5v10"/></svg>
      <svg width="20" height="20" viewBox="0 0 20 20" fill="none" stroke=${s} stroke-width="1.400"><circle cx="10" cy="10" r="8.500"/><path d="M5 10h10"/></svg>
    `;
  }
}
